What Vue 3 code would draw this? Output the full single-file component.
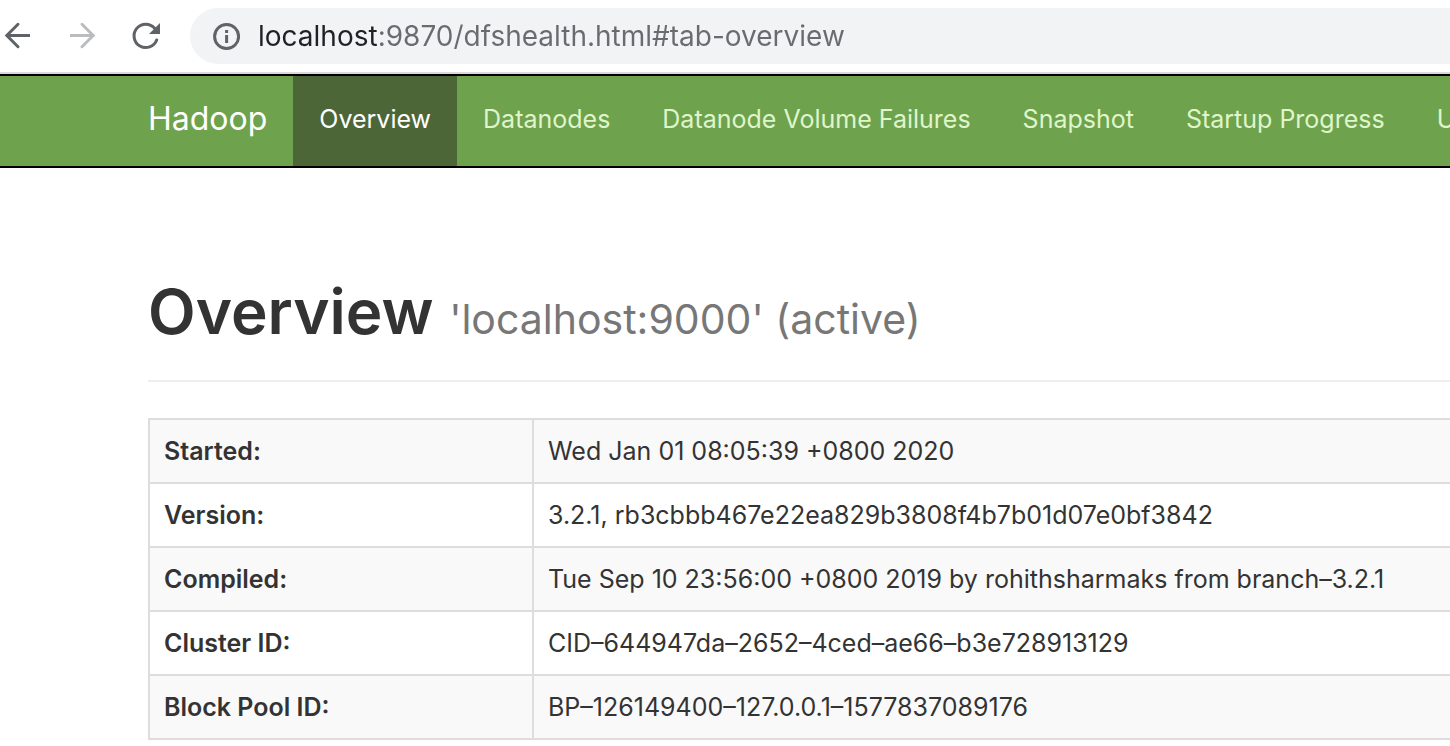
<script setup>
import { ref } from 'vue'

const address = ref('localhost:9870/dfshealth.html#tab-overview')

const tabs = [
  { label: 'Overview', active: true },
  { label: 'Datanodes' },
  { label: 'Datanode Volume Failures' },
  { label: 'Snapshot' },
  { label: 'Startup Progress' },
  { label: 'Utilities' },
]

const rows = [
  ['Started:', 'Wed Jan 01 08:05:39 +0800 2020'],
  ['Version:', '3.2.1, rb3cbbb467e22ea829b3808f4b7b01d07e0bf3842'],
  ['Compiled:', 'Tue Sep 10 23:56:00 +0800 2019 by rohithsharmaks from branch–3.2.1'],
  ['Cluster ID:', 'CID–644947da–2652–4ced–ae66–b3e728913129'],
  ['Block Pool ID:', 'BP–126149400–127.0.0.1–1577837089176'],
]
</script>

<template>
  <div class="page">
    <div class="toolbar">
      <button class="tool" type="button" aria-label="Back">
        <svg viewBox="0 0 32 32"><path d="M30 15.500H7" /><path class="head" d="M18 4.300L6.800 15.500L18 26.700" /></svg>
      </button>
      <button class="tool" type="button" aria-label="Forward" disabled>
        <svg viewBox="0 0 32 32"><path d="M6 15.500H29" /><path class="head" d="M18 4.300L29.200 15.500L18 26.700" /></svg>
      </button>
      <button class="tool" type="button" aria-label="Reload">
        <svg viewBox="0 0 32 32">
          <path class="head" d="M28.700 20A11.700 11.700 0 1 1 26.600 8.200" />
          <path class="solid" d="M32 3V14H21Z" />
        </svg>
      </button>
      <div class="omnibox">
        <button class="info" type="button" aria-label="View site information">
          <svg viewBox="0 0 28 28">
            <circle cx="14.600" cy="14.500" r="12" />
            <path d="M14.600 13V21M14.600 8V11" />
          </svg>
        </button>
        <input v-model="address" class="address" type="text" aria-label="Address" spellcheck="false" />
      </div>
    </div>

    <nav class="navbar">
      <a class="brand" href="#">Hadoop</a>
      <ul class="tabs">
        <li v-for="tab in tabs" :key="tab.label">
          <a href="#" class="tab" :class="{ active: tab.active }">{{ tab.label }}</a>
        </li>
      </ul>
    </nav>

    <main class="content">
      <h1 class="title">Overview <small>'localhost:9000' (active)</small></h1>
      <table class="facts">
        <tbody>
          <tr v-for="[name, value] in rows" :key="name">
            <th scope="row">{{ name }}</th>
            <td>{{ value }}</td>
          </tr>
        </tbody>
      </table>
    </main>
  </div>
</template>

<style>
body {
  margin: 0;
  background: #fff;
}
</style>

<style scoped>
.page {
  overflow: hidden;
  font-family: Inter, "Liberation Sans", sans-serif;
  font-size: 25px;
  color: #333;
}

.toolbar {
  display: flex;
  align-items: center;
  gap: 32px;
  height: 72px;
  border-bottom: 2px solid #dadada;
}

.tool,
.info {
  flex: none;
  padding: 0;
  border: 0;
  background: none;
}

.tool {
  width: 32px;
  height: 32px;
}

.tool svg,
.info svg {
  display: block;
  width: 100%;
  height: 100%;
  fill: none;
  stroke: #5f6368;
  stroke-width: 3;
}

.tool svg .head {
  stroke-linecap: round;
}

.tool:disabled svg {
  stroke: #babcbe;
}

.tool svg .solid {
  fill: #5f6368;
  stroke: none;
}

.omnibox {
  display: flex;
  flex: 1;
  align-items: center;
  gap: 18px;
  height: 56px;
  margin-left: -2px;
  padding-left: 22px;
  border-radius: 28px 0 0 28px;
  background: #f1f3f4;
}

.info {
  width: 28px;
  height: 28px;
}

.address {
  flex: 1;
  min-width: 0;
  padding: 0;
  border: 0;
  outline: 0;
  background: linear-gradient(90deg, #202124 119px, #696b6e 119px);
  background-clip: text;
  color: transparent;
  font-family: inherit;
  font-size: 28px;
  line-height: 40px;
}

.navbar {
  display: flex;
  height: 90px;
  padding-left: 148px;
  border-top: 2px solid #000;
  border-bottom: 2px solid #000;
  background: #6fa24c;
  line-height: 86px;
  white-space: nowrap;
}

.brand {
  flex: none;
  padding-right: 26px;
  color: #fff;
  font-size: 32px;
  text-decoration: none;
}

.tabs {
  display: flex;
  margin: 0;
  padding: 0;
  list-style: none;
}

.tab {
  display: block;
  height: 100%;
  padding: 0 26px;
  color: #dff5cb;
  text-decoration: none;
}

.tabs li {
  height: 90px;
}

.tab.active {
  background: #4c6638;
  color: #fff;
}

.content {
  padding: 96px 0 6px 148px;
}

.title {
  margin: 0 0 36px;
  padding-bottom: 20px;
  border-bottom: 2px solid #eee;
  font-size: 62px;
  font-weight: 600;
  line-height: 96px;
  white-space: nowrap;
}

.title small {
  color: #777;
  font-size: 41px;
  font-weight: 400;
  line-height: 1;
}

.facts {
  width: 100%;
  border-collapse: collapse;
}

.facts th,
.facts td {
  height: 62px;
  padding: 0 14px;
  border: 2px solid #ddd;
  line-height: 36px;
  text-align: left;
  white-space: nowrap;
}

.facts td {
  border-right: 0;
}

.facts th {
  box-sizing: border-box;
  width: 384px;
  font-weight: 600;
}

.facts tr:nth-child(odd) {
  background: #f9f9f9;
}
</style>
